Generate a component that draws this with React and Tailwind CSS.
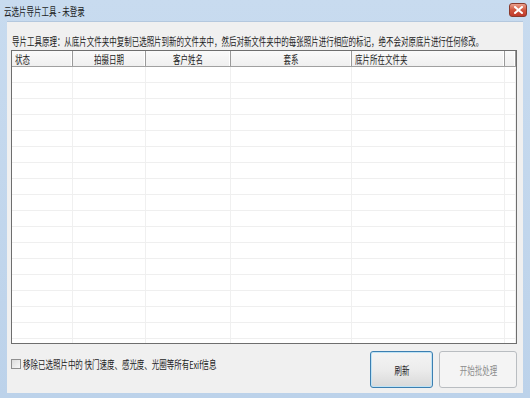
import React from "react";

const cols = [
  { label: "状态", w: "w-[61px]", align: "justify-start pl-[3px]" },
  { label: "拍摄日期", w: "w-[73px]", align: "justify-center" },
  { label: "客户姓名", w: "w-[85px]", align: "justify-center" },
  { label: "套系", w: "w-[121px]", align: "justify-center" },
  { label: "底片所在文件夹", w: "w-[153px]", align: "justify-start pl-[3px]" },
  { label: "", w: "flex-1", align: "" },
];

const rows = Array.from({ length: 18 });

// squashed CJK text like the old bitmap font
const T = ({ children, className = "" }) => (
  <span className={`block w-max whitespace-nowrap text-[11px] leading-[12px] scale-x-[0.68] ${className}`}>
    {children}
  </span>
);

const App = () => {
  return (
    <div
      className="w-[530px] h-[398px] flex flex-col bg-gradient-to-b from-[#c8dbef] to-[#bcd2ea] text-[#1b1b1b] overflow-hidden leading-none"
      style={{ fontFamily: '"Noto Sans CJK SC", "Noto Sans", sans-serif' }}
    >
      {/* Title bar */}
      <div className="h-[21px] flex items-center justify-between pl-[4px] pr-[3px]">
        <T className="origin-left">云选片导片工具 - 未登录</T>
        <div className="w-[18px] h-[14px] mt-[-1px] rounded-[3px] border border-[#8a3a2c] bg-gradient-to-b from-[#e9a08e] via-[#d0553d] to-[#c0392b] flex items-center justify-center">
          <svg width="9" height="8" viewBox="0 0 9 8">
            <path d="M1 1 L8 7 M8 1 L1 7" stroke="#fff" strokeWidth="2" strokeLinecap="square" />
          </svg>
        </div>
      </div>

      {/* Client area */}
      <div className="flex-1 mx-[7px] mb-[5px] bg-[#f0f0f0] border-t border-[#b4c8de] flex flex-col">
        <div className="h-[28px] pl-[5px] pt-[13px]">
          <T className="origin-left">
            导片工具原理：从底片文件夹中复制已选照片到新的文件夹中，然后对新文件夹中的每张照片进行相应的标记，绝不会对原底片进行任何修改。
          </T>
        </div>

        {/* List view */}
        <div className="ml-[4px] mr-[6px] h-[294px] border border-[#6e6e6e] bg-white flex flex-col overflow-hidden">
          <div className="h-[16px] flex bg-gradient-to-b from-[#fafafa] to-[#efefef] border-b border-[#a0a0a0]">
            {cols.map((c, i) => (
              <div
                key={i}
                className={`${c.w} h-full flex items-center ${c.align} border-r border-[#9a9a9a] shadow-[inset_-1px_0_0_#ffffff]`}
              >
                {c.label && (
                  <T className={i === 0 || i === 4 ? "origin-left" : "origin-center"}>{c.label}</T>
                )}
              </div>
            ))}
          </div>
          <div className="flex-1 overflow-hidden">
            {rows.map((_, r) => (
              <div key={r} className="h-[16px] flex border-b border-[#efefef]">
                {cols.map((c, i) => (
                  <div key={i} className={`${c.w} h-full border-r border-[#f0f0f0]`} />
                ))}
              </div>
            ))}
          </div>
        </div>

        {/* Bottom bar */}
        <div className="flex-1 flex items-start pl-[4px] pr-[6px] pt-[7px]">
          <div className="flex items-center mt-[7px] flex-1">
            <div className="w-[10px] h-[10px] border border-[#8f8f8f] bg-gradient-to-br from-[#dcdcdc] to-[#f8f8f8]" />
            <T className="origin-left ml-[2px]">移除已选照片中的 快门速度、感光度、光圈等所有Exif信息</T>
          </div>
          <div className="flex gap-[6px]">
            <button className="w-[63px] h-[37px] rounded-[3px] border border-[#3c7fb1] bg-gradient-to-b from-[#f4f4f4] via-[#ececec] to-[#d9d9d9] shadow-[inset_0_0_0_1px_#bfe3f5] flex items-center justify-center">
              <T className="origin-center">刷新</T>
            </button>
            <button className="w-[78px] h-[37px] rounded-[3px] border border-[#b9bdc1] bg-[#f4f4f4] flex items-center justify-center">
              <T className="origin-center text-[#8d8d8d]">开始批处理</T>
            </button>
          </div>
        </div>
      </div>
    </div>
  );
};

export default App;
